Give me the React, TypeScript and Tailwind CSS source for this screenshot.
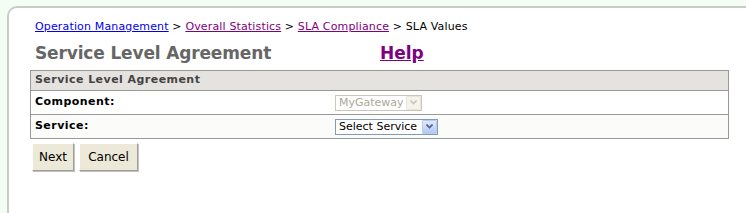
import React from "react";

const font = { fontFamily: '"DejaVu Sans", Verdana, sans-serif' };

const Chevron = ({ disabled }: { disabled?: boolean }) => (
  <svg width="7" height="5" viewBox="0 0 7 5">
    <path
      d="M0.5 0.5 L3.5 3.5 L6.5 0.5"
      fill="none"
      stroke={disabled ? "#c9c7ba" : "#4d6185"}
      strokeWidth="1.6"
    />
  </svg>
);

const FakeSelect = ({
  label,
  disabled,
  width,
}: {
  label: string;
  disabled?: boolean;
  width: string;
}) => (
  <div
    className={`flex items-center h-[16px] border ${width} ${
      disabled ? "border-[#c9c7ba] bg-white" : "border-[#7f9db9] bg-white"
    }`}
  >
    <span
      className={`flex-1 pl-[3px] text-[11px] leading-none ${
        disabled ? "text-[#aca899]" : "text-black"
      }`}
    >
      {label}
    </span>
    <span
      className={`flex items-center justify-center w-[15px] h-[14px] rounded-[1px] border ${
        disabled
          ? "bg-[#f5f4ea] border-[#e8e6da]"
          : "bg-gradient-to-b from-[#dfe8fd] to-[#b3c8f5] border-[#b9cbf3]"
      }`}
    >
      <Chevron disabled={disabled} />
    </span>
  </div>
);

const XPButton = ({ children, width }: { children: React.ReactNode; width: string }) => (
  <button
    className={`${width} h-[28px] bg-[#ece9d8] text-[12px] text-black border border-t-white border-l-white border-r-[#a0a0a0] border-b-[#a0a0a0] shadow-[1px_1px_0_#c0c0c0]`}
    style={{ fontFamily: '"DejaVu Sans", Tahoma, sans-serif' }}
  >
    {children}
  </button>
);

export default function App() {
  return (
    <div className="w-[746px] h-[213px] bg-[#f3fdf3] overflow-hidden" style={font}>
      <div className="ml-[7px] mt-[6px] h-[260px] bg-white border-l-2 border-t-2 border-[#c8cbc8] rounded-tl-[10px] pl-[21px] pt-[12px]">
        <div className="pl-[5px] text-[11px] leading-[14px] tracking-[0.15px] text-black">
          <a href="#" className="text-[#0000ee] underline">Operation Management</a>
          <span> &gt; </span>
          <a href="#" className="text-[#800080] underline">Overall Statistics</a>
          <span> &gt; </span>
          <a href="#" className="text-[#800080] underline">SLA Compliance</a>
          <span> &gt; SLA Values</span>
        </div>
        <div className="flex items-end pl-[5px] mt-[6px] h-[24px]">
          <span className="w-[345px] text-[17px] font-bold text-[#666666] leading-[22px] tracking-[-0.15px]">
            Service Level Agreement
          </span>
          <a href="#" className="text-[17px] font-bold text-[#800080] underline leading-[22px]">
            Help
          </a>
        </div>
        <div className="mt-[6px] w-[699px] border border-[#999999]">
          <div className="h-[20px] bg-[#e4e3df] flex items-center pl-[4px] border-b border-[#999999] text-[11px] font-bold tracking-[0.45px] text-[#444444]">
            Service Level Agreement
          </div>
          <div className="h-[24px] bg-white flex items-center pl-[4px] border-b border-[#999999]">
            <span className="w-[300px] text-[11px] font-bold tracking-[0.45px] text-black">Component:</span>
            <FakeSelect label="MyGateway" disabled width="w-[87px]" />
          </div>
          <div className="h-[23px] bg-[#fbfbf9] flex items-center pl-[4px]">
            <span className="w-[300px] text-[11px] font-bold tracking-[0.45px] text-black">Service:</span>
            <FakeSelect label="Select Service" width="w-[103px]" />
          </div>
        </div>
        <div className="flex gap-[5px] mt-[4px] pl-[2px]">
          <XPButton width="w-[42px]">Next</XPButton>
          <XPButton width="w-[59px]">Cancel</XPButton>
        </div>
      </div>
    </div>
  );
}
